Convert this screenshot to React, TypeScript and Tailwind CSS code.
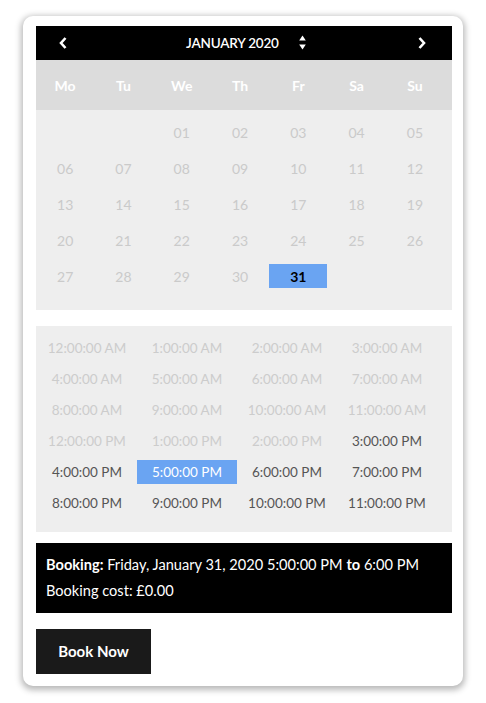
import React from "react";

const days = ["Mo", "Tu", "We", "Th", "Fr", "Sa", "Su"];
const weeks: (string | null)[][] = [
  [null, null, "01", "02", "03", "04", "05"],
  ["06", "07", "08", "09", "10", "11", "12"],
  ["13", "14", "15", "16", "17", "18", "19"],
  ["20", "21", "22", "23", "24", "25", "26"],
  ["27", "28", "29", "30", "31", null, null],
];

const times = [
  "12:00:00 AM", "1:00:00 AM", "2:00:00 AM", "3:00:00 AM",
  "4:00:00 AM", "5:00:00 AM", "6:00:00 AM", "7:00:00 AM",
  "8:00:00 AM", "9:00:00 AM", "10:00:00 AM", "11:00:00 AM",
  "12:00:00 PM", "1:00:00 PM", "2:00:00 PM", "3:00:00 PM",
  "4:00:00 PM", "5:00:00 PM", "6:00:00 PM", "7:00:00 PM",
  "8:00:00 PM", "9:00:00 PM", "10:00:00 PM", "11:00:00 PM",
];

export default function App() {
  return (
    <div
      className="w-[486px] h-[703px] bg-white pt-[16px] pl-[23px]"
      style={{ fontFamily: "Lato, 'Liberation Sans', sans-serif" }}
    >
      <div className="w-[440px] h-[670px] bg-white rounded-[10px] shadow-[0_2px_6px_2px_rgba(0,0,0,0.28)] pt-[10px] pl-[13px] pr-[11px]">
        {/* Header */}
        <div className="h-[34px] bg-black flex items-center text-white relative">
          <svg className="absolute left-[23px] top-[11px]" width="8" height="12" viewBox="0 0 8 12">
            <path d="M6.5 1 L2 6 L6.5 11" stroke="white" strokeWidth="2.6" fill="none" strokeLinejoin="miter" />
          </svg>
          <div className="absolute left-[150px] top-0 h-[34px] flex items-center text-[13.5px] font-semibold tracking-[-0.2px]">
            JANUARY 2020
          </div>
          <svg className="absolute left-[263px] top-[9px]" width="7" height="15" viewBox="0 0 7 15">
            <path d="M3.5 0.5 L6.8 5.5 L0.2 5.5 Z" fill="white" />
            <path d="M3.5 14.5 L6.8 9.5 L0.2 9.5 Z" fill="white" />
          </svg>
          <svg className="absolute left-[382px] top-[11px]" width="8" height="12" viewBox="0 0 8 12">
            <path d="M1.5 1 L6 6 L1.5 11" stroke="white" strokeWidth="2.6" fill="none" strokeLinejoin="miter" />
          </svg>
        </div>

        {/* Day names */}
        <div className="h-[50px] bg-[#dcdcdc] grid grid-cols-[repeat(7,58.3px)] items-center">
          {days.map((d) => (
            <div key={d} className="text-center text-white text-[14px] font-bold">
              {d}
            </div>
          ))}
        </div>

        {/* Dates */}
        <div className="bg-[#eeeeee] pt-[10px] pb-[22px] flex flex-col gap-[12px]">
          {weeks.map((w, i) => (
            <div key={i} className="grid grid-cols-[repeat(7,58.3px)] h-[24px]">
              {w.map((d, j) =>
                d === "31" ? (
                  <div
                    key={j}
                    className="bg-[#6aa4f2] flex items-center justify-center text-black font-bold text-[14px]"
                  >
                    31
                  </div>
                ) : (
                  <div key={j} className="flex items-center justify-center text-[#cacaca] text-[14px]">
                    {d ?? ""}
                  </div>
                )
              )}
            </div>
          ))}
        </div>

        {/* Times */}
        <div className="mt-[16px] bg-[#eeeeee] pt-[10px] pb-[17px] pl-[1px]">
          <div className="grid grid-cols-[repeat(4,100px)] gap-y-[7px]">
            {times.map((t, i) => {
              const selected = i === 17;
              const enabled = i >= 15;
              return (
                <div
                  key={t}
                  className={
                    "h-[24px] flex items-center justify-center text-[13.5px] " +
                    (selected
                      ? "bg-[#6aa4f2] text-white"
                      : enabled
                      ? "text-[#555555]"
                      : "text-[#cccccc]")
                  }
                >
                  {t}
                </div>
              );
            })}
          </div>
        </div>

        {/* Booking info */}
        <div className="mt-[11px] bg-black text-white text-[14.6px] leading-[26px] px-[10px] pt-[9px] pb-[9px]">
          <div>
            <span className="font-bold">Booking:</span> Friday, January 31, 2020 5:00:00 PM{" "}
            <span className="font-bold">to</span> 6:00 PM
          </div>
          <div>Booking cost: £0.00</div>
        </div>

        {/* Button */}
        <button className="mt-[16px] w-[115px] h-[45px] bg-[#1a1a1a] text-white font-bold text-[15px]">
          Book Now
        </button>
      </div>
    </div>
  );
}
